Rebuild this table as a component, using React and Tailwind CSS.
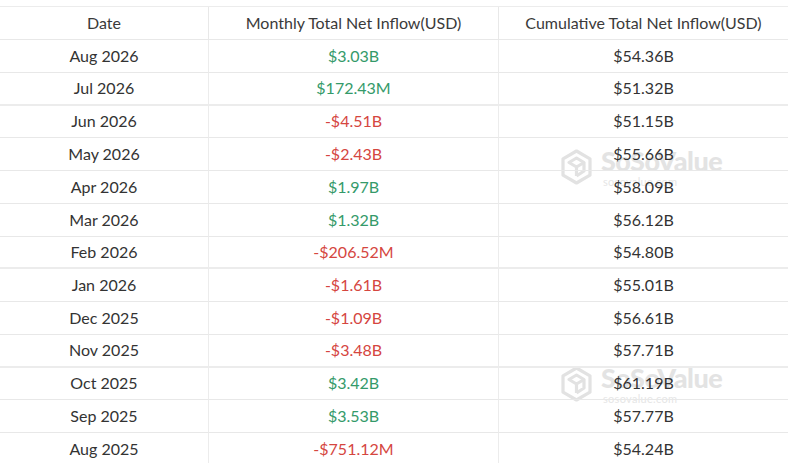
import React from 'react';

const rows = [
  { date: 'Aug 2026', monthly: '$3.03B', cum: '$54.36B' },
  { date: 'Jul 2026', monthly: '$172.43M', cum: '$51.32B', thick: true },
  { date: 'Jun 2026', monthly: '-$4.51B', cum: '$51.15B' },
  { date: 'May 2026', monthly: '-$2.43B', cum: '$55.66B' },
  { date: 'Apr 2026', monthly: '$1.97B', cum: '$58.09B' },
  { date: 'Mar 2026', monthly: '$1.32B', cum: '$56.12B' },
  { date: 'Feb 2026', monthly: '-$206.52M', cum: '$54.80B', thick: true },
  { date: 'Jan 2026', monthly: '-$1.61B', cum: '$55.01B' },
  { date: 'Dec 2025', monthly: '-$1.09B', cum: '$56.61B' },
  { date: 'Nov 2025', monthly: '-$3.48B', cum: '$57.71B', thick: true },
  { date: 'Oct 2025', monthly: '$3.42B', cum: '$61.19B' },
  { date: 'Sep 2025', monthly: '$3.53B', cum: '$57.77B' },
  { date: 'Aug 2025', monthly: '-$751.12M', cum: '$54.24B', last: true },
];

// faint brand watermark that sits behind the numbers
const Watermark = ({ top }) => (
  <div className="absolute left-[560px] flex items-center gap-[8px] pointer-events-none" style={{ top }}>
    <svg width="33" height="36" viewBox="0 0 33 36" fill="none" stroke="#e2e2e2" strokeWidth="3.2" strokeLinejoin="round">
      <path d="M16.5 2 L30 9.8 L30 26.2 L16.5 34 L3 26.2 L3 9.8 Z" />
      <path d="M9 13.5 L16.5 9 L24 13.5 L16.5 18 Z M16.5 18 L16.5 27 M24 13.5 L24 22 L16.5 27" />
    </svg>
    <div className="flex flex-col leading-none">
      <span className="text-[27px] font-black tracking-[-0.5px] text-[#e3e3e3]" style={{ fontFamily: 'Lato, sans-serif' }}>SoSoValue</span>
      <span className="text-[11px] mt-[2px] ml-[2px] text-[#e6e6e6] tracking-[0.3px]" style={{ fontFamily: 'Lato, sans-serif' }}>sosovalue.com</span>
    </div>
  </div>
);

const App = () => {
  return (
    <div className="relative w-[788px] h-[463px] bg-white overflow-hidden pt-[6px]" style={{ fontFamily: 'Lato, "Liberation Sans", sans-serif' }}>
      <Watermark top={147} />
      <Watermark top={364} />
      <div className="relative grid grid-cols-[209px_290px_289px] border-t border-[#ececec] text-[16px] text-[#333]">
        <div className="h-[33px] flex items-center justify-center border-b border-[#e8e8e8] border-r text-[#3a3a3a]">Date</div>
        <div className="h-[33px] flex items-center justify-center border-b border-[#e8e8e8] border-r text-[#3a3a3a]">Monthly Total Net Inflow(USD)</div>
        <div className="h-[33px] flex items-center justify-center border-b border-[#e8e8e8] text-[#3a3a3a]">Cumulative Total Net Inflow(USD)</div>
        {rows.map((r) => {
          const b = r.last ? '' : r.thick ? 'border-b-[2px] border-b-[#ececec]' : 'border-b border-b-[#e8e8e8]';
          const neg = r.monthly.startsWith('-');
          return (
            <React.Fragment key={r.date}>
              <div className={`h-[32.75px] flex items-center justify-center border-r border-r-[#ececec] ${b}`}>{r.date}</div>
              <div className={`h-[32.75px] flex items-center justify-center border-r border-r-[#ececec] ${b} ${neg ? 'text-[#d5463f]' : 'text-[#349a6a]'}`}>{r.monthly}</div>
              <div className={`h-[32.75px] flex items-center justify-center ${b}`}>{r.cum}</div>
            </React.Fragment>
          );
        })}
      </div>
    </div>
  );
};

export default App;
